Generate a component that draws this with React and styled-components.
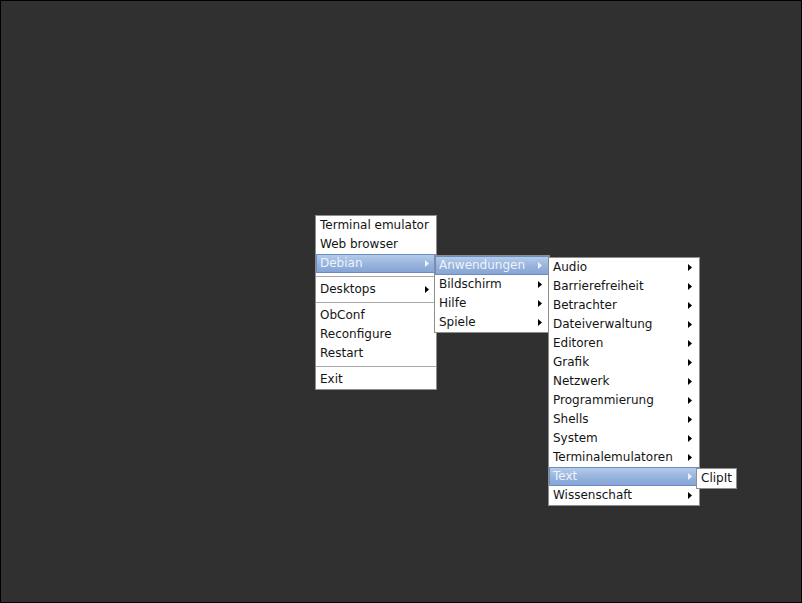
import React from 'react'
import styled, { createGlobalStyle } from 'styled-components'

const Global = createGlobalStyle`
  html, body {
    margin: 0;
    padding: 0;
    background: #000;
  }
  #root {
    width: 802px;
    height: 603px;
  }
`

const Desktop = styled.div`
  position: relative;
  width: 802px;
  height: 603px;
  box-sizing: border-box;
  border: 1px solid #000;
  background: #303030;
  overflow: hidden;
  font-family: "DejaVu Sans", "Noto Sans", sans-serif;
  font-size: 12px;
`

// menus sit on the desktop at fixed spots, like windows
const Menu = styled.div`
  position: absolute;
  left: ${p => p.$x}px;
  top: ${p => p.$y}px;
  width: ${p => p.$w}px;
  box-sizing: border-box;
  background: #fff;
  border: 1px solid #8e8e8e;
  display: flex;
  flex-direction: column;
`

const Item = styled.div`
  height: 19px;
  box-sizing: border-box;
  display: flex;
  align-items: center;
  justify-content: space-between;
  padding: 0 7px 0 4px;
  color: ${p => (p.$active ? '#eef3fb' : '#141414')};
  white-space: nowrap;
  ${p =>
    p.$active &&
    `
    background: linear-gradient(to bottom, #b4cbea 0%, #97b3dd 55%, #86a5d6 100%);
    border: 1px solid #6b8cc2;
    padding: 0 6px 0 3px;
  `}
`

const Label = styled.span`
  line-height: 19px;
`

const Separator = styled.div`
  height: 7px;
  display: flex;
  align-items: center;
  &::after {
    content: '';
    display: block;
    width: 100%;
    height: 1px;
    background: #a8a8a8;
  }
`

const Arrow = ({ light }) => (
  <svg width="4" height="7" viewBox="0 0 4 7">
    <path d="M0 0 L4 3.5 L0 7 Z" fill={light ? '#eef3fb' : '#000'} />
  </svg>
)

const Entry = ({ label, sub, active }) => (
  <Item $active={active}>
    <Label>{label}</Label>
    {sub && <Arrow light={active} />}
  </Item>
)

const categories = [
  'Audio', 'Barrierefreiheit', 'Betrachter', 'Dateiverwaltung', 'Editoren',
  'Grafik', 'Netzwerk', 'Programmierung', 'Shells', 'System',
  'Terminalemulatoren', 'Text', 'Wissenschaft',
]

export default function App() {
  return (
    <Desktop>
      <Global />
      <Menu $x={314} $y={214} $w={122}>
        <Entry label="Terminal emulator" />
        <Entry label="Web browser" />
        <Entry label="Debian" sub active />
        <Separator />
        <Entry label="Desktops" sub />
        <Separator />
        <Entry label="ObConf" />
        <Entry label="Reconfigure" />
        <Entry label="Restart" />
        <Separator />
        <Entry label="Exit" />
      </Menu>

      <Menu $x={433} $y={254} $w={116}>
        <Entry label="Anwendungen" sub active />
        <Entry label="Bildschirm" sub />
        <Entry label="Hilfe" sub />
        <Entry label="Spiele" sub />
      </Menu>

      <Menu $x={547} $y={256} $w={152}>
        {categories.map(c => (
          <Entry key={c} label={c} sub active={c === 'Text'} />
        ))}
      </Menu>

      <Menu $x={695} $y={467} $w={41}>
        <Entry label="ClipIt" />
      </Menu>
    </Desktop>
  )
}
